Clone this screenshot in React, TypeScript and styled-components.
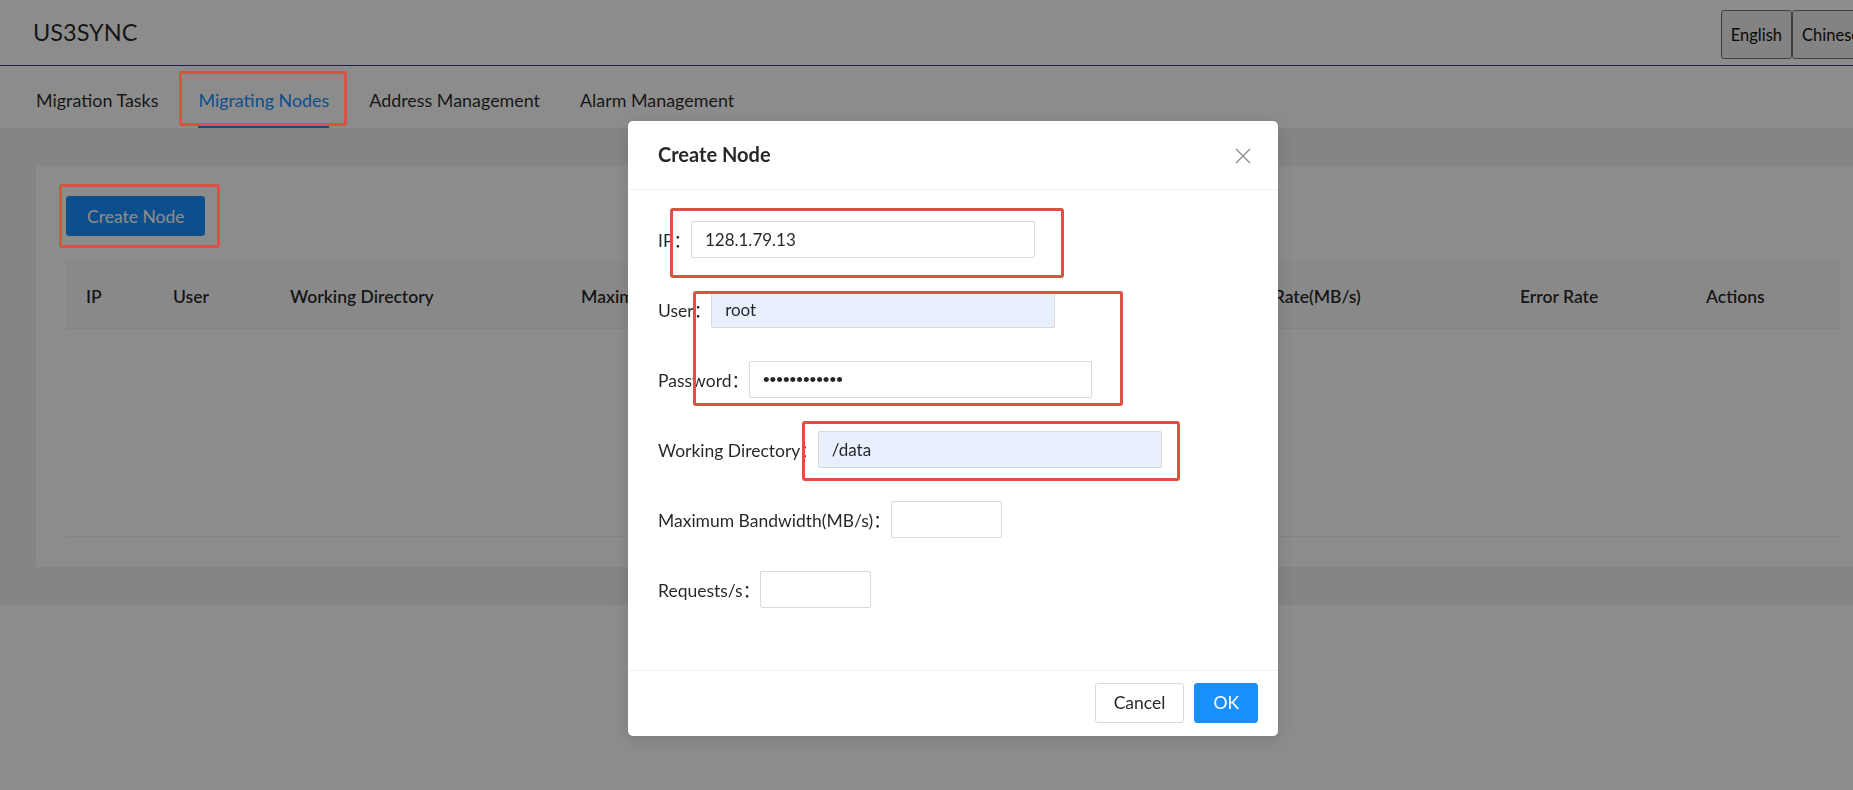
import React from 'react';
import styled, { createGlobalStyle } from 'styled-components';

const FONT = `Lato, "Noto Sans CJK SC", sans-serif`;
const RED = '#df4f42';
const BLUE = '#1890ff';

const Global = createGlobalStyle`
  html, body { margin: 0; padding: 0; overflow: hidden; background: #fff; }
  body { font-family: ${FONT}; color: rgba(0, 0, 0, 0.85); font-size: 17.5px; }
  *, *::before, *::after { box-sizing: border-box; }
`;

const Page = styled.div`
  width: 1906px;
  min-height: 790px;
`;

const Header = styled.header`
  height: 66px;
  display: flex;
  align-items: center;
  justify-content: space-between;
  padding: 0 36px 0 33px;
  border-bottom: 1px solid #2f3c91;
  background: #fff;
`;

const Logo = styled.div`
  font-size: 23.5px;
  line-height: 1;
  color: rgba(0, 0, 0, 0.85);
`;

const LangGroup = styled.div`
  display: flex;
  align-self: flex-start;
  margin-top: 10px;
`;

const LangButton = styled.button`
  height: 49px;
  padding: 0 9px;
  font-family: ${FONT};
  font-size: 16.5px;
  color: #111;
  background: #efefef;
  border: 1px solid #767676;
  border-radius: 3px;
`;

const Nav = styled.nav`
  height: 62px;
  display: flex;
  padding-left: 16px;
  background: #fff;
`;

const Tab = styled.div<{ $active?: boolean }>`
  position: relative;
  display: flex;
  align-items: center;
  padding: 6px 20px 0;
  font-size: 17.9px;
  color: ${(p) => (p.$active ? BLUE : 'rgba(0, 0, 0, 0.85)')};
  &::after {
    content: '';
    position: absolute;
    left: 20px;
    right: 20px;
    bottom: 0;
    height: 2.5px;
    background: ${(p) => (p.$active ? BLUE : 'transparent')};
  }
`;

/* red annotation frame drawn over the page and the dimming mask */
const Mark = styled.span<{ $l: number; $t: number; $w: number; $h: number }>`
  position: absolute;
  left: ${(p) => p.$l}px;
  top: ${(p) => p.$t}px;
  width: ${(p) => p.$w}px;
  height: ${(p) => p.$h}px;
  border: 3px solid ${RED};
  border-radius: 3px;
  z-index: 1001;
  pointer-events: none;
`;

const Main = styled.main`
  background: #f0f2f5;
  padding: 38px 36px;
`;

const Card = styled.section`
  background: #fff;
  padding: 30px;
`;

const Toolbar = styled.div`
  position: relative;
  display: inline-flex;
  margin-bottom: 25px;
`;

const PrimaryButton = styled.button`
  height: 40px;
  padding: 0 20px;
  font-family: ${FONT};
  font-size: 17.5px;
  color: #fff;
  background: ${BLUE};
  border: 1px solid ${BLUE};
  border-radius: 3px;
`;

const COLS = '87px 117px 291px 300px 329px 310px 186px 154px';

const TableHead = styled.div`
  display: grid;
  grid-template-columns: ${COLS};
  height: 68px;
  align-items: center;
  padding-top: 4px;
  background: #fafafa;
  border-bottom: 1px solid #f0f0f0;
`;

const Th = styled.div`
  padding: 0 20px;
  font-weight: 600;
  font-size: 17.5px;
  white-space: nowrap;
`;

const TableBody = styled.div`
  height: 208px;
  border-bottom: 1px solid #f0f0f0;
`;

const Mask = styled.div`
  position: fixed;
  inset: 0;
  background: rgba(0, 0, 0, 0.45);
  z-index: 1000;
`;

const ModalWrap = styled.div`
  position: fixed;
  top: 0;
  left: 0;
  width: 1906px;
  height: 100%;
  display: flex;
  justify-content: center;
  align-items: flex-start;
  padding-top: 121px;
  z-index: 1001;
`;

const Modal = styled.div`
  position: relative;
  width: 650px;
  background: #fff;
  border-radius: 5px;
  box-shadow: 0 4px 16px rgba(0, 0, 0, 0.12);
`;

const ModalHeader = styled.div`
  padding: 20px 30px;
  border-bottom: 1px solid #f0f0f0;
`;

const ModalTitle = styled.div`
  font-size: 20px;
  font-weight: 700;
  line-height: 27.5px;
`;

const CloseButton = styled.button`
  position: absolute;
  top: 0;
  right: 0;
  width: 70px;
  height: 70px;
  display: flex;
  align-items: center;
  justify-content: center;
  padding: 0;
  background: none;
  border: 0;
`;

const ModalBody = styled.div`
  padding: 30px;
`;

const FormRow = styled.div`
  position: relative;
  display: flex;
  align-items: center;
  height: 40px;
  margin-bottom: 30px;
`;

const Label = styled.label`
  white-space: nowrap;
  font-size: 17.5px;
`;

const TextInput = styled.input<{ $w: number; $filled?: boolean }>`
  width: ${(p) => p.$w}px;
  height: 37px;
  padding: 0 13px;
  font-family: ${FONT};
  font-size: 17px;
  color: rgba(0, 0, 0, 0.85);
  background: ${(p) => (p.$filled ? '#e8f0fe' : '#fff')};
  border: 1px solid #d9d9d9;
  border-radius: 2px;
  outline: none;
`;

const PasswordInput = styled(TextInput)`
  font-family: 'Liberation Sans', sans-serif;
  font-size: 19px;
`;

const ModalFooter = styled.div`
  display: flex;
  justify-content: flex-end;
  gap: 10px;
  padding: 12px 20px 13px;
  border-top: 1px solid #f0f0f0;
`;

const FooterButton = styled.button<{ $primary?: boolean }>`
  height: 40px;
  padding: 0 18px;
  font-family: ${FONT};
  font-size: 17.5px;
  color: ${(p) => (p.$primary ? '#fff' : 'rgba(0, 0, 0, 0.85)')};
  background: ${(p) => (p.$primary ? BLUE : '#fff')};
  border: 1px solid ${(p) => (p.$primary ? BLUE : '#d9d9d9')};
  border-radius: 3px;
`;

const CloseIcon = () => (
  <svg width="16" height="16" viewBox="0 0 16 16" fill="none">
    <path d="M1 1 L15 15 M15 1 L1 15" stroke="rgba(0,0,0,0.45)" strokeWidth="1.4" />
  </svg>
);

const tabs = ['Migration Tasks', 'Migrating Nodes', 'Address Management', 'Alarm Management'];
const columns = [
  'IP',
  'User',
  'Working Directory',
  'Maximum Bandwidth(MB/s)',
  'Requests/s',
  'Current Rate(MB/s)',
  'Error Rate',
  'Actions',
];

export default function App() {
  return (
    <Page>
      <Global />
      <Header>
        <Logo>US3SYNC</Logo>
        <LangGroup>
          <LangButton>English</LangButton>
          <LangButton>Chinese</LangButton>
        </LangGroup>
      </Header>
      <Nav>
        {tabs.map((t) => (
          <Tab key={t} $active={t === 'Migrating Nodes'}>
            {t}
            {t === 'Migrating Nodes' && <Mark $l={1} $t={5} $w={168} $h={55} />}
          </Tab>
        ))}
      </Nav>
      <Main>
        <Card>
          <Toolbar>
            <PrimaryButton>Create Node</PrimaryButton>
            <Mark $l={-7} $t={-12} $w={161} $h={64} />
          </Toolbar>
          <TableHead>
            {columns.map((c) => (
              <Th key={c}>{c}</Th>
            ))}
          </TableHead>
          <TableBody />
        </Card>
      </Main>

      <Mask />
      <ModalWrap>
        <Modal>
          <ModalHeader>
            <ModalTitle>Create Node</ModalTitle>
          </ModalHeader>
          <CloseButton aria-label="Close">
            <CloseIcon />
          </CloseButton>
          <ModalBody>
            <FormRow>
              <Label>IP：</Label>
              <TextInput $w={344} value="128.1.79.13" readOnly />
              <Mark $l={12} $t={-12} $w={394} $h={70} />
            </FormRow>
            <FormRow>
              <Label>User：</Label>
              <TextInput $w={344} $filled value="root" readOnly />
              <Mark $l={35} $t={1} $w={430} $h={115} />
            </FormRow>
            <FormRow>
              <Label>Password：</Label>
              <PasswordInput $w={343} type="password" value="abcdefghijkl" readOnly />
            </FormRow>
            <FormRow>
              <Label>Working Directory：</Label>
              <TextInput $w={344} $filled value="/data" readOnly />
              <Mark $l={144} $t={-9} $w={378} $h={60} />
            </FormRow>
            <FormRow>
              <Label>Maximum Bandwidth(MB/s)：</Label>
              <TextInput $w={111} value="" readOnly />
            </FormRow>
            <FormRow>
              <Label>Requests/s：</Label>
              <TextInput $w={111} value="" readOnly />
            </FormRow>
          </ModalBody>
          <ModalFooter>
            <FooterButton>Cancel</FooterButton>
            <FooterButton $primary>OK</FooterButton>
          </ModalFooter>
        </Modal>
      </ModalWrap>
    </Page>
  );
}
